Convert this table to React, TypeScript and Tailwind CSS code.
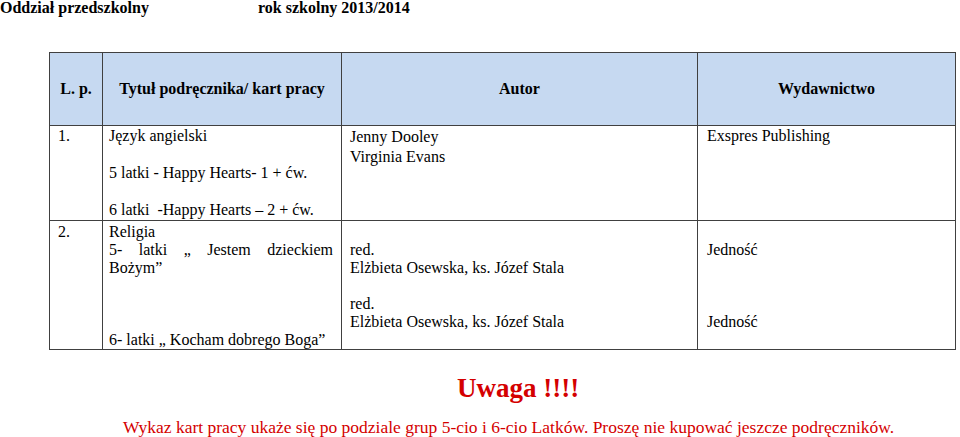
import React from "react";

// Lista podręczników dla oddziału przedszkolnego
const serif = "font-['Liberation_Serif','Times_New_Roman',serif]";

const Blank = (): React.JSX.Element => <div>&nbsp;</div>;

export default function App(): React.JSX.Element {
  return (
    <div className={`${serif} w-[960px] min-h-[437px] bg-white text-black`}>
      {/* Nagłówek strony */}
      <div className="flex text-[16px] font-bold leading-[15px]">
        <span className="w-[258px]">Oddział przedszkolny</span>
        <span>rok szkolny 2013/2014</span>
      </div>

      {/* Tabela */}
      <div className="pl-[49px] mt-[37px]">
        <table className="table-fixed border-collapse w-[906px] text-[16px]">
          <colgroup>
            <col className="w-[53px]" />
            <col className="w-[239px]" />
            <col className="w-[356px]" />
            <col className="w-[258px]" />
          </colgroup>
          <thead>
            <tr className="h-[73px] bg-[#c6d9f1] font-bold">
              <th className="border border-[#404040] text-center align-middle">L. p.</th>
              <th className="border border-[#404040] text-center align-middle">Tytuł podręcznika/ kart pracy</th>
              <th className="border border-[#404040] text-center align-middle">Autor</th>
              <th className="border border-[#404040] text-center align-middle">Wydawnictwo</th>
            </tr>
          </thead>
          <tbody>
            <tr className="align-top leading-[18.5px]">
              <td className="border border-[#404040] pl-[8px] pt-[1px]">1.</td>
              <td className="border border-[#404040] pl-[6px] pr-[8px] pt-[1px]">
                <div>Język angielski</div>
                <Blank />
                <div>5 latki - Happy Hearts- 1 + ćw.</div>
                <Blank />
                <div>{"6 latki\u00a0 -Happy Hearts – 2 + ćw."}</div>
              </td>
              <td className="border border-[#404040] pl-[8px] pt-[1px] leading-[20px]">
                <div>Jenny Dooley</div>
                <div>Virginia Evans</div>
              </td>
              <td className="border border-[#404040] pl-[9px] pt-[1px]">Exspres Publishing</td>
            </tr>
            <tr className="align-top leading-[18px]">
              <td className="border border-[#404040] pl-[8px] pt-[2px]">2.</td>
              <td className="border border-[#404040] pl-[6px] pr-[8px] pt-[2px]">
                <div>Religia</div>
                <div className="text-justify">5- latki „ Jestem dzieckiem Bożym”</div>
                <Blank />
                <Blank />
                <Blank />
                <div>6- latki „ Kocham dobrego Boga”</div>
              </td>
              <td className="border border-[#404040] pl-[8px] pt-[2px]">
                <Blank />
                <div>red.</div>
                <div>Elżbieta Osewska, ks. Józef Stala</div>
                <Blank />
                <div>red.</div>
                <div>Elżbieta Osewska, ks. Józef Stala</div>
              </td>
              <td className="border border-[#404040] pl-[9px] pt-[2px]">
                <Blank />
                <div>Jedność</div>
                <Blank />
                <Blank />
                <Blank />
                <div>Jedność</div>
              </td>
            </tr>
          </tbody>
        </table>
      </div>

      {/* Uwaga */}
      <div className="mt-[23px] pl-[457px] text-[27px] font-bold leading-[30px] text-[#d40000]">
        Uwaga !!!!
      </div>
      <div className="mt-[14px] pl-[123px] text-[17.5px] leading-[20px] text-[#d40000] whitespace-nowrap">
        Wykaz kart pracy ukaże się po podziale grup 5-cio i 6-cio Latków. Proszę nie kupować jeszcze podręczników.
      </div>
    </div>
  );
}
